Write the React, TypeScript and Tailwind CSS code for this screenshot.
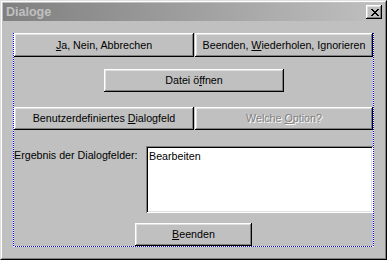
import React from "react";

const btn =
  "flex items-center justify-center bg-[#c0c0c0] text-[10.7px] shadow-[inset_-1px_-1px_#000,inset_1px_1px_#fff,inset_-2px_-2px_#808080,inset_2px_2px_#dfdfdf] font-['Liberation_Sans',Arial,sans-serif] leading-none";

function CloseGlyph() {
  const rows = [
    "XX....XX",
    ".XX..XX.",
    "..XXXX..",
    "...XX...",
    "..XXXX..",
    ".XX..XX.",
    "XX....XX",
  ];
  return (
    <svg width="8" height="7" viewBox="0 0 8 7" shapeRendering="crispEdges">
      {rows.flatMap((r, y) =>
        r.split("").map((c, x) =>
          c === "X" ? <rect key={`${x}-${y}`} x={x} y={y} width="1" height="1" fill="#000" /> : null
        )
      )}
    </svg>
  );
}

export default function App() {
  return (
    <div className="w-[387px] h-[260px] border border-t-[#dfdfdf] border-l-[#dfdfdf] border-r-black border-b-black bg-[#c0c0c0] font-['Liberation_Sans',Arial,sans-serif]">
      <div className="h-full border border-t-white border-l-white border-r-[#808080] border-b-[#808080] p-px flex flex-col">
        <div className="h-[18px] flex items-center justify-between bg-gradient-to-r from-[#808080] to-[#c0c0c0] pl-[3px] pr-[2px]">
          <span className="text-[12.5px] font-bold text-[#c0c0c0] leading-none">Dialoge</span>
          <div className="w-[16px] h-[14px] flex items-center justify-center bg-[#c0c0c0] shadow-[inset_-1px_-1px_#000,inset_1px_1px_#fff,inset_-2px_-2px_#808080,inset_2px_2px_#dfdfdf] pl-px">
            <CloseGlyph />
          </div>
        </div>
        <div className="pl-[10px] pt-[12px]">
          <div className="w-[361px] h-[214px] pl-px pr-px pb-px bg-no-repeat [background-image:repeating-linear-gradient(to_bottom,#0000ff_0px,#0000ff_1px,#ffffff_1px,#ffffff_2px),repeating-linear-gradient(to_bottom,#0000ff_0px,#0000ff_1px,#ffffff_1px,#ffffff_2px),repeating-linear-gradient(to_right,#0000ff_0px,#0000ff_1px,#ffffff_1px,#ffffff_2px)] [background-size:1px_100%,1px_100%,100%_1px] [background-position:left_top,right_top,left_bottom] flex flex-col">
            <div className="flex gap-px">
              <div className={`${btn} text-black w-[180px] h-[24px]`}>
                <span><u>J</u>a, Nein, Abbrechen</span>
              </div>
              <div className={`${btn} text-black w-[178px] h-[24px]`}>
                <span>Beenden, <u>W</u>iederholen, Ignorieren</span>
              </div>
            </div>
            <div className="mt-[12px] ml-[90px]">
              <div className={`${btn} text-black w-[180px] h-[23px]`}>
                <span>Datei ö<u>f</u>fnen</span>
              </div>
            </div>
            <div className="mt-[15px] flex gap-px">
              <div className={`${btn} text-black w-[180px] h-[23px]`}>
                <span>Benutzerdefiniertes <u>D</u>ialogfeld</span>
              </div>
              <div className={`${btn} text-[#808080] w-[178px] h-[23px]`}>
                <span className="[text-shadow:1px_1px_0_#fff]">Welche <u>O</u>ption?</span>
              </div>
            </div>
            <div className="mt-[16px] flex">
              <div className="w-[132px] pt-[3px] text-[10.7px] text-black leading-[13px]">Ergebnis der Dialogfelder:</div>
              <div className="w-[227px] h-[67px] ml-auto bg-white shadow-[inset_1px_1px_#808080,inset_-1px_-1px_#fff,inset_2px_2px_#000,inset_-2px_-2px_#dfdfdf] px-[3px] pt-[4px] text-[10.7px] text-black leading-[13px]">
                Bearbeiten
              </div>
            </div>
            <div className="mt-[10px] ml-[121px]">
              <div className={`${btn} text-black w-[117px] h-[23px]`}>
                <span><u>B</u>eenden</span>
              </div>
            </div>
          </div>
        </div>
      </div>
    </div>
  );
}
